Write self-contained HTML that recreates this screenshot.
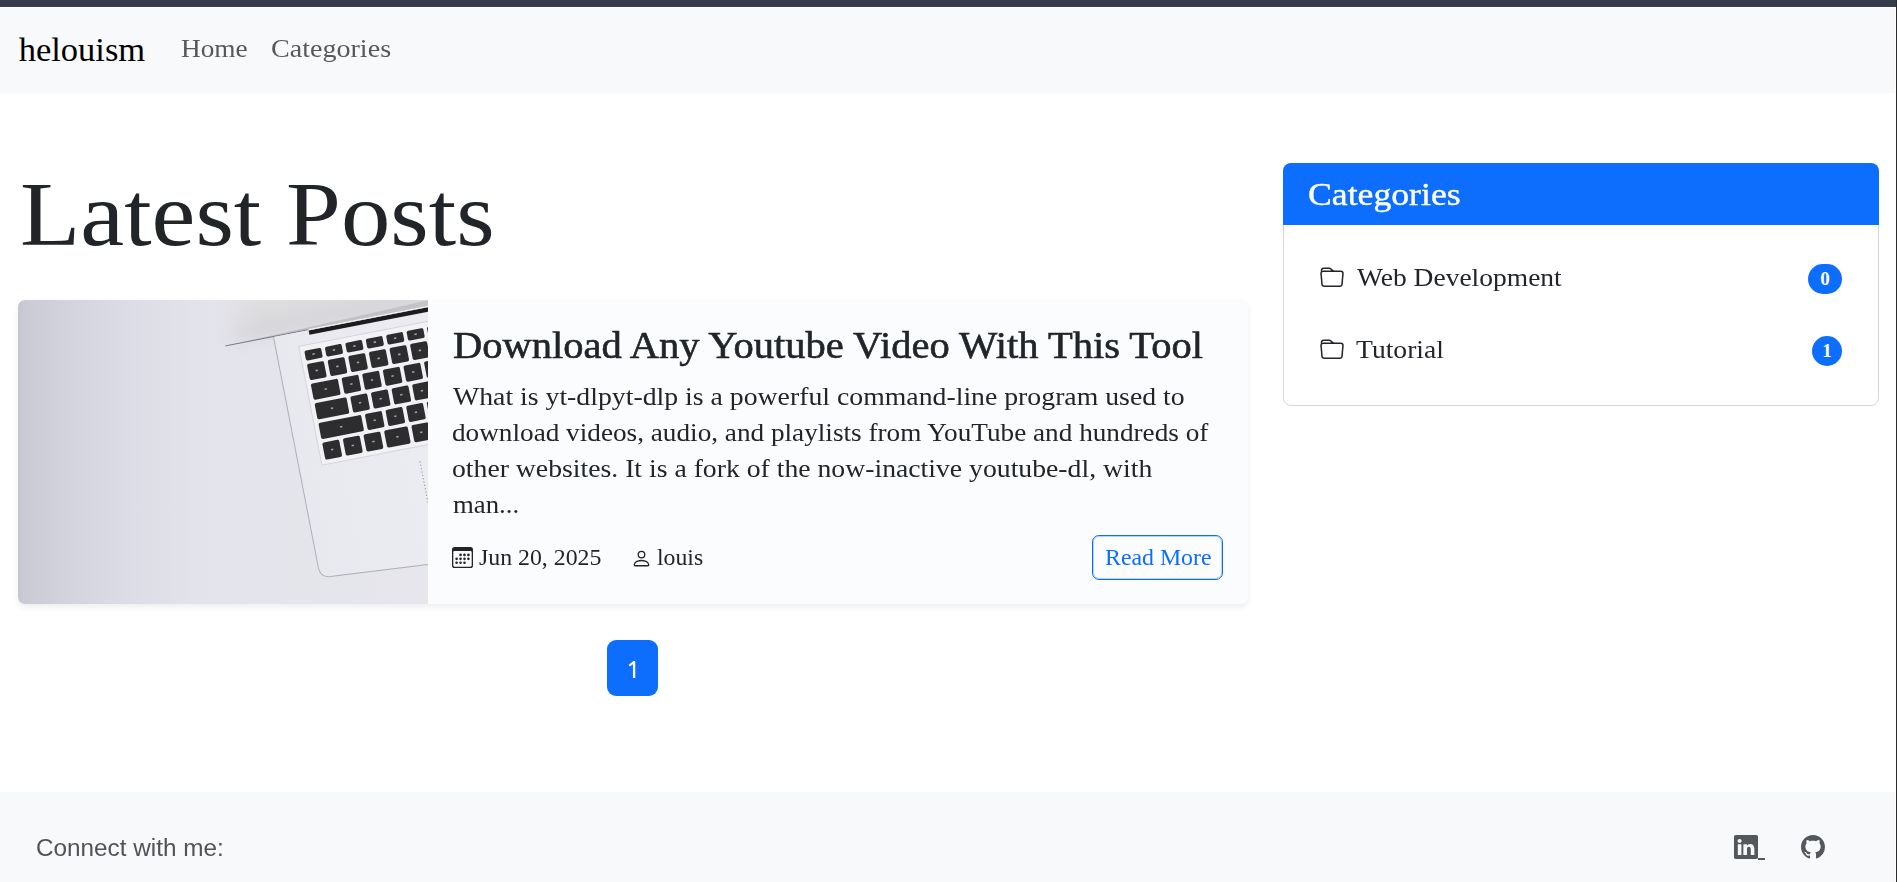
<!DOCTYPE html>
<html><head><meta charset="utf-8">
<style>
html,body{margin:0;padding:0;width:1897px;height:882px;overflow:hidden;background:#fff;position:relative}
.t{position:absolute;white-space:nowrap;line-height:1;font-family:"Liberation Serif",serif;transform-origin:0 0}
.ic{position:absolute;display:block}
.s{font-family:"Liberation Sans",sans-serif}
#topbar{position:absolute;left:0;top:0;width:1897px;height:7px;background:#363b49}
#nav{position:absolute;left:0;top:8px;width:1895px;height:85px;background:#f8f9fa}
#redge{position:absolute;left:1896px;top:0;width:1px;height:882px;background:#2b2b2b}
#card{position:absolute;left:18px;top:300px;width:1230px;height:304px;background:#fbfcfe;border-radius:7px;box-shadow:0 3px 6px rgba(0,0,0,.075)}
#img{position:absolute;left:18px;top:300px;width:410px;height:304px;border-radius:7px 0 0 7px;overflow:hidden}
#side{position:absolute;left:1283px;top:163px;width:594px;height:241px;border:1px solid #d6d6d6;border-radius:8px;background:#fff;overflow:hidden}
#sidehd{position:absolute;left:1283px;top:163px;width:596px;height:62px;background:#0d6efd;border-radius:8px 8px 0 0}
.badge{position:absolute;background:#0d6efd;border-radius:15px;color:#fff;font-family:"Liberation Serif",serif;font-weight:700;font-size:19px;text-align:center;line-height:30px;height:30px}
#page{position:absolute;left:607px;top:640px;width:51px;height:56px;background:#0d6efd;border-radius:9px}
#btn{position:absolute;left:1092px;top:535px;width:129px;height:43px;border:1px solid #0d6efd;border-radius:7px;box-shadow:inset 0 0 0 1px rgba(13,110,253,.3)}
#footer{position:absolute;left:0;top:792px;width:1895px;height:90px;background:#f8f9fa}
</style></head><body>
<div id="topbar"></div>
<div id="nav"></div>
<div class="t" style="left:18.7px;top:31.5px;font-size:34.5px;color:#000">helouism</div>
<div class="t" style="left:181.2px;top:36.3px;font-size:26.15px;color:#575859;transform:scaleX(1.044)">Home</div>
<div class="t" style="left:270.9px;top:36.3px;font-size:26.15px;color:#575859;transform:scaleX(1.074)">Categories</div>

<div class="t" style="left:20px;top:169.7px;font-size:90.77px;color:#212529;transform:scaleX(1.088)">Latest Posts</div>

<div id="card"></div>
<div id="img"><svg width="410" height="304" viewBox="0 0 410 304">
<defs>
<linearGradient id="bg" x1="0" y1="0" x2="1" y2="0">
<stop offset="0" stop-color="#c6c6cf"/><stop offset="0.02" stop-color="#cbcbd6"/><stop offset="0.12" stop-color="#d3d3de"/><stop offset="0.28" stop-color="#dddde7"/><stop offset="0.45" stop-color="#e3e3eb"/><stop offset="1" stop-color="#e6e6ec"/>
</linearGradient>
<linearGradient id="lid" x1="0" y1="1" x2="0" y2="0">
<stop offset="0" stop-color="#d3d3d7"/><stop offset="0.35" stop-color="#dddde0"/><stop offset="1" stop-color="#eaeaec"/>
</linearGradient>
<linearGradient id="wedge" x1="0" y1="0" x2="1" y2="0">
<stop offset="0" stop-color="#bdbdc2"/><stop offset="1" stop-color="#c6c6cb"/>
</linearGradient>
<linearGradient id="body" x1="0" y1="0" x2="1" y2="0">
<stop offset="0" stop-color="#e8e8ef"/><stop offset="1" stop-color="#eeeef4"/>
</linearGradient>
<linearGradient id="mg" gradientUnits="userSpaceOnUse" x1="-95" y1="0" x2="-35" y2="0"><stop offset="0" stop-color="#fff" stop-opacity="0"/><stop offset="1" stop-color="#fff" stop-opacity="1"/></linearGradient><mask id="mk" maskUnits="userSpaceOnUse" x="-200" y="-200" width="600" height="400"><rect x="-200" y="-200" width="600" height="400" fill="url(#mg)"/></mask>
<filter id="bl" x="-50%" y="-50%" width="200%" height="200%"><feGaussianBlur stdDeviation="6"/></filter>
</defs>
<rect width="410" height="304" fill="url(#bg)"/>
<g transform="translate(280.8,46.4) rotate(-11)">
<g mask="url(#mk)"><path d="M-66,-15 L220,-15 L220,-95 L-60,-95 Z" fill="url(#lid)" filter="url(#bl)"/></g>
<path d="M-72,-14.5 L220,-14.5 L220,-23 Z" fill="url(#wedge)"/>
<path d="M-72,-14.5 L220,-14.5" stroke="#77777e" stroke-width="0.9"/>
<path d="M-23,-14 L220,-14 L220,248 L-13,232 Q-23,231 -23,221 Z" fill="url(#body)"/>
<path d="M-23,-14 L-23,221 Q-23,231 -13,232 L220,248" fill="none" stroke="#aeaeb6" stroke-width="1"/>
<rect x="12.7" y="-13.8" width="220" height="4.4" fill="#1c1c1e"/><path d="M12.7,-14.6 L220,-14.6" stroke="#f6f6f8" stroke-width="1.1"/>
<rect x="0" y="0" width="220" height="121" fill="#f2f2f6" stroke="#cfcfd6" stroke-width="0.8"/>
<g fill="#2d2d2f"><rect x="4.5" y="5.5" width="17" height="10" rx="1.8"/><rect x="25.3" y="5.5" width="17" height="10" rx="1.8"/><rect x="46.1" y="5.5" width="17" height="10" rx="1.8"/><rect x="66.9" y="5.5" width="17" height="10" rx="1.8"/><rect x="87.7" y="5.5" width="17" height="10" rx="1.8"/><rect x="108.5" y="5.5" width="17" height="10" rx="1.8"/><rect x="129.3" y="5.5" width="17" height="10" rx="1.8"/><rect x="4.5" y="19" width="17.2" height="16.5" rx="1.8"/><rect x="25.5" y="19" width="17.2" height="16.5" rx="1.8"/><rect x="46.5" y="19" width="17.2" height="16.5" rx="1.8"/><rect x="67.5" y="19" width="17.2" height="16.5" rx="1.8"/><rect x="88.5" y="19" width="17.2" height="16.5" rx="1.8"/><rect x="109.5" y="19" width="17.2" height="16.5" rx="1.8"/><rect x="130.5" y="19" width="17.2" height="16.5" rx="1.8"/><rect x="4.5" y="39" width="27.5" height="16.5" rx="1.8"/><rect x="35.8" y="39" width="17.2" height="16.5" rx="1.8"/><rect x="56.8" y="39" width="17.2" height="16.5" rx="1.8"/><rect x="77.8" y="39" width="17.2" height="16.5" rx="1.8"/><rect x="98.8" y="39" width="17.2" height="16.5" rx="1.8"/><rect x="119.8" y="39" width="17.2" height="16.5" rx="1.8"/><rect x="140.8" y="39" width="17.2" height="16.5" rx="1.8"/><rect x="4.5" y="59" width="32.5" height="16.5" rx="1.8"/><rect x="40.8" y="59" width="17.2" height="16.5" rx="1.8"/><rect x="61.8" y="59" width="17.2" height="16.5" rx="1.8"/><rect x="82.8" y="59" width="17.2" height="16.5" rx="1.8"/><rect x="103.8" y="59" width="17.2" height="16.5" rx="1.8"/><rect x="124.8" y="59" width="17.2" height="16.5" rx="1.8"/><rect x="145.8" y="59" width="17.2" height="16.5" rx="1.8"/><rect x="4.5" y="79" width="43.5" height="16.5" rx="1.8"/><rect x="51.8" y="79" width="17.2" height="16.5" rx="1.8"/><rect x="72.8" y="79" width="17.2" height="16.5" rx="1.8"/><rect x="93.8" y="79" width="17.2" height="16.5" rx="1.8"/><rect x="114.8" y="79" width="17.2" height="16.5" rx="1.8"/><rect x="135.8" y="79" width="17.2" height="16.5" rx="1.8"/><rect x="4.5" y="99" width="17.2" height="17.5" rx="1.8"/><rect x="25.5" y="99" width="17.2" height="17.5" rx="1.8"/><rect x="46.5" y="99" width="17.2" height="17.5" rx="1.8"/><rect x="67.5" y="99" width="24" height="17.5" rx="1.8"/><rect x="95.3" y="99" width="17.2" height="17.5" rx="1.8"/><rect x="116.3" y="99" width="17.2" height="17.5" rx="1.8"/><rect x="137.3" y="99" width="17.2" height="17.5" rx="1.8"/></g><g fill="#bdbdc2" opacity="0.8"><rect x="11.8" y="9.5" width="2.4" height="1.6"/><rect x="32.6" y="9.5" width="2.4" height="1.6"/><rect x="53.4" y="9.5" width="2.4" height="1.6"/><rect x="74.2" y="9.5" width="2.4" height="1.6"/><rect x="95.0" y="9.5" width="2.4" height="1.6"/><rect x="115.8" y="9.5" width="2.4" height="1.6"/><rect x="136.6" y="9.5" width="2.4" height="1.6"/><rect x="11.9" y="26.2" width="2.4" height="1.6"/><rect x="32.9" y="26.2" width="2.4" height="1.6"/><rect x="53.9" y="26.2" width="2.4" height="1.6"/><rect x="74.9" y="26.2" width="2.4" height="1.6"/><rect x="95.9" y="26.2" width="2.4" height="1.6"/><rect x="116.9" y="26.2" width="2.4" height="1.6"/><rect x="137.9" y="26.2" width="2.4" height="1.6"/><rect x="17.1" y="46.2" width="2.4" height="1.6"/><rect x="43.2" y="46.2" width="2.4" height="1.6"/><rect x="64.2" y="46.2" width="2.4" height="1.6"/><rect x="85.2" y="46.2" width="2.4" height="1.6"/><rect x="106.2" y="46.2" width="2.4" height="1.6"/><rect x="127.2" y="46.2" width="2.4" height="1.6"/><rect x="148.2" y="46.2" width="2.4" height="1.6"/><rect x="19.6" y="66.2" width="2.4" height="1.6"/><rect x="48.2" y="66.2" width="2.4" height="1.6"/><rect x="69.2" y="66.2" width="2.4" height="1.6"/><rect x="90.2" y="66.2" width="2.4" height="1.6"/><rect x="111.2" y="66.2" width="2.4" height="1.6"/><rect x="132.2" y="66.2" width="2.4" height="1.6"/><rect x="153.2" y="66.2" width="2.4" height="1.6"/><rect x="25.1" y="86.2" width="2.4" height="1.6"/><rect x="59.2" y="86.2" width="2.4" height="1.6"/><rect x="80.2" y="86.2" width="2.4" height="1.6"/><rect x="101.2" y="86.2" width="2.4" height="1.6"/><rect x="122.2" y="86.2" width="2.4" height="1.6"/><rect x="143.2" y="86.2" width="2.4" height="1.6"/><rect x="11.9" y="106.8" width="2.4" height="1.6"/><rect x="32.9" y="106.8" width="2.4" height="1.6"/><rect x="53.9" y="106.8" width="2.4" height="1.6"/><rect x="78.3" y="106.8" width="2.4" height="1.6"/><rect x="102.7" y="106.8" width="2.4" height="1.6"/><rect x="123.7" y="106.8" width="2.4" height="1.6"/><rect x="144.7" y="106.8" width="2.4" height="1.6"/></g>
<line x1="97" y1="136" x2="97" y2="181" stroke="#8a8a92" stroke-width="0.9" stroke-dasharray="1.2 2.2"/>
</g>
</svg></div>
<div class="t" style="left:452.8px;top:326.1px;font-size:38.46px;color:#212529;transform:scaleX(1.054);-webkit-text-stroke:0.6px #212529">Download Any Youtube Video With This Tool</div>
<div class="t" style="left:453px;top:384.3px;font-size:26.15px;color:#212529;transform:scaleX(1.062)">What is yt-dlpyt-dlp is a powerful command-line program used to</div>
<div class="t" style="left:451.9px;top:420.3px;font-size:26.15px;color:#212529;transform:scaleX(1.041)">download videos, audio, and playlists from YouTube and hundreds of</div>
<div class="t" style="left:451.9px;top:456.3px;font-size:26.15px;color:#212529;transform:scaleX(1.060)">other websites. It is a fork of the now-inactive youtube-dl, with</div>
<div class="t" style="left:452.5px;top:492.3px;font-size:26.15px;color:#212529;transform:scaleX(1.024)">man...</div>
<div class="t" style="left:478.5px;top:545.8px;font-size:23.08px;color:#212529;transform:scaleX(1.032)">Jun 20, 2025</div>
<div class="t" style="left:657px;top:546.3px;font-size:23.08px;color:#212529;transform:scaleX(1.03)">louis</div>
<svg class="ic" style="left:452px;top:547px" width="21" height="21" viewBox="0 0 16 16" fill="#212529"><path d="M14 0H2a2 2 0 0 0-2 2v12a2 2 0 0 0 2 2h12a2 2 0 0 0 2-2V2a2 2 0 0 0-2-2M1 3.857C1 3.384 1.448 3 2 3h12c.552 0 1 .384 1 .857v10.286c0 .473-.448.857-1 .857H2c-.552 0-1-.384-1-.857z"/><path d="M6.5 7a1 1 0 1 0 0-2 1 1 0 0 0 0 2m3 0a1 1 0 1 0 0-2 1 1 0 0 0 0 2m3 0a1 1 0 1 0 0-2 1 1 0 0 0 0 2m-9 3a1 1 0 1 0 0-2 1 1 0 0 0 0 2m3 0a1 1 0 1 0 0-2 1 1 0 0 0 0 2m3 0a1 1 0 1 0 0-2 1 1 0 0 0 0 2m3 0a1 1 0 1 0 0-2 1 1 0 0 0 0 2m-9 3a1 1 0 1 0 0-2 1 1 0 0 0 0 2m3 0a1 1 0 1 0 0-2 1 1 0 0 0 0 2m3 0a1 1 0 1 0 0-2 1 1 0 0 0 0 2"/></svg><svg class="ic" style="left:631px;top:548px" width="21" height="21" viewBox="0 0 16 16" fill="#212529"><path d="M8 8a3 3 0 1 0 0-6 3 3 0 0 0 0 6m2-3a2 2 0 1 1-4 0 2 2 0 0 1 4 0m4 8c0 1-1 1-1 1H3s-1 0-1-1 1-4 6-4 6 3 6 4m-1-.004c-.001-.246-.154-.986-.832-1.664C11.516 10.68 10.289 10 8 10s-3.516.68-4.168 1.332c-.678.678-.83 1.418-.832 1.664z"/></svg><div id="btn"></div>
<div class="t" style="left:1105.3px;top:546.3px;font-size:23.08px;color:#0d6efd;transform:scaleX(1.032)">Read More</div>

<div id="page"></div><svg class="ic" style="left:0;top:0" width="700" height="700"><path d="M634.1,661.2V678" stroke="#fff" stroke-width="2.3" fill="none"/><path d="M634.6,661.6L629.3,665.6" stroke="#fff" stroke-width="2" fill="none"/></svg>

<div id="side"></div><div id="sidehd"></div>
<div class="t" style="left:1307.6px;top:178.2px;font-size:32.31px;color:#fff;transform:scaleX(1.105);-webkit-text-stroke:0.4px #fff">Categories</div>
<div class="t" style="left:1357px;top:265.2px;font-size:26.15px;color:#212529;transform:scaleX(1.052)">Web Development</div>
<div class="t" style="left:1356.4px;top:337.1px;font-size:26.15px;color:#212529;transform:scaleX(1.056)">Tutorial</div>
<svg class="ic" style="left:1320px;top:266px" width="24" height="24" viewBox="0 0 16 16" fill="#212529"><path d="M.54 3.87.5 3a2 2 0 0 1 2-2h3.672a2 2 0 0 1 1.414.586l.828.828A2 2 0 0 0 9.828 3h3.982a2 2 0 0 1 1.992 2.181l-.637 7A2 2 0 0 1 13.174 14H2.826a2 2 0 0 1-1.991-1.819l-.637-7a2 2 0 0 1 .342-1.31zM2.19 4a1 1 0 0 0-.996 1.09l.637 7a1 1 0 0 0 .995.91h10.348a1 1 0 0 0 .995-.91l.637-7A1 1 0 0 0 13.81 4zm4.69-1.707A1 1 0 0 0 6.172 2H2.5a1 1 0 0 0-1 .981l.006.139q.323-.119.684-.12h5.396z"/></svg><svg class="ic" style="left:1320px;top:338px" width="24" height="24" viewBox="0 0 16 16" fill="#212529"><path d="M.54 3.87.5 3a2 2 0 0 1 2-2h3.672a2 2 0 0 1 1.414.586l.828.828A2 2 0 0 0 9.828 3h3.982a2 2 0 0 1 1.992 2.181l-.637 7A2 2 0 0 1 13.174 14H2.826a2 2 0 0 1-1.991-1.819l-.637-7a2 2 0 0 1 .342-1.31zM2.19 4a1 1 0 0 0-.996 1.09l.637 7a1 1 0 0 0 .995.91h10.348a1 1 0 0 0 .995-.91l.637-7A1 1 0 0 0 13.81 4zm4.69-1.707A1 1 0 0 0 6.172 2H2.5a1 1 0 0 0-1 .981l.006.139q.323-.119.684-.12h5.396z"/></svg><div class="badge" style="left:1808px;top:264px;width:34px">0</div>
<div class="badge" style="left:1812px;top:336px;width:30px">1</div>

<div id="footer"></div>
<div class="t s" style="left:35.8px;top:836.3px;font-size:24.64px;color:#505357;transform:scaleX(0.987)">Connect with me:</div>

<svg class="ic" style="left:1734px;top:835px" width="24" height="24" viewBox="0 0 16 16" fill="#54585c"><path d="M0 1.146C0 .513.526 0 1.175 0h13.65C15.474 0 16 .513 16 1.146v13.708c0 .633-.526 1.146-1.175 1.146H1.175C.526 16 0 15.487 0 14.854zm4.943 12.248V6.169H2.542v7.225zm-1.2-8.212c.837 0 1.358-.554 1.358-1.248-.015-.709-.52-1.248-1.342-1.248S2.4 3.226 2.4 3.934c0 .694.521 1.248 1.327 1.248zm4.908 8.212V9.359c0-.216.016-.432.08-.586.173-.431.568-.878 1.232-.878.869 0 1.216.662 1.216 1.634v3.865h2.401V9.25c0-2.22-1.184-3.252-2.764-3.252-1.274 0-1.845.7-2.165 1.193v.025h-.016l.016-.025V6.169h-2.4c.03.678 0 7.225 0 7.225z"/></svg><div style="position:absolute;left:1758px;top:858px;width:7px;height:2px;background:#54585c"></div><svg class="ic" style="left:1801px;top:835px" width="24" height="24" viewBox="0 0 16 16" fill="#54585c"><path d="M8 0C3.58 0 0 3.58 0 8c0 3.54 2.290 6.530 5.470 7.590.4.070.550-.170.550-.380 0-.190-.010-.820-.010-1.490-2.010.370-2.530-.490-2.690-.940-.090-.230-.480-.940-.820-1.130-.280-.150-.680-.520-.010-.530.630-.010 1.080.580 1.230.820.720 1.210 1.870.870 2.330.660.070-.520.280-.870.510-1.070-1.780-.2-3.640-.890-3.640-3.950 0-.870.310-1.590.820-2.150-.080-.2-.360-1.020.080-2.120 0 0 .670-.210 2.2.820.640-.180 1.320-.270 2-.270s1.360.090 2 .270c1.530-1.040 2.2-.820 2.2-.820.440 1.1.160 1.920.080 2.120.510.560.820 1.270.820 2.150 0 3.070-1.870 3.750-3.650 3.950.290.250.540.730.540 1.480 0 1.070-.010 1.930-.010 2.2 0 .210.150.460.550.380A8.010 8.010 0 0 0 16 8c0-4.420-3.580-8-8-8"/></svg><div id="redge"></div>
</body></html>
